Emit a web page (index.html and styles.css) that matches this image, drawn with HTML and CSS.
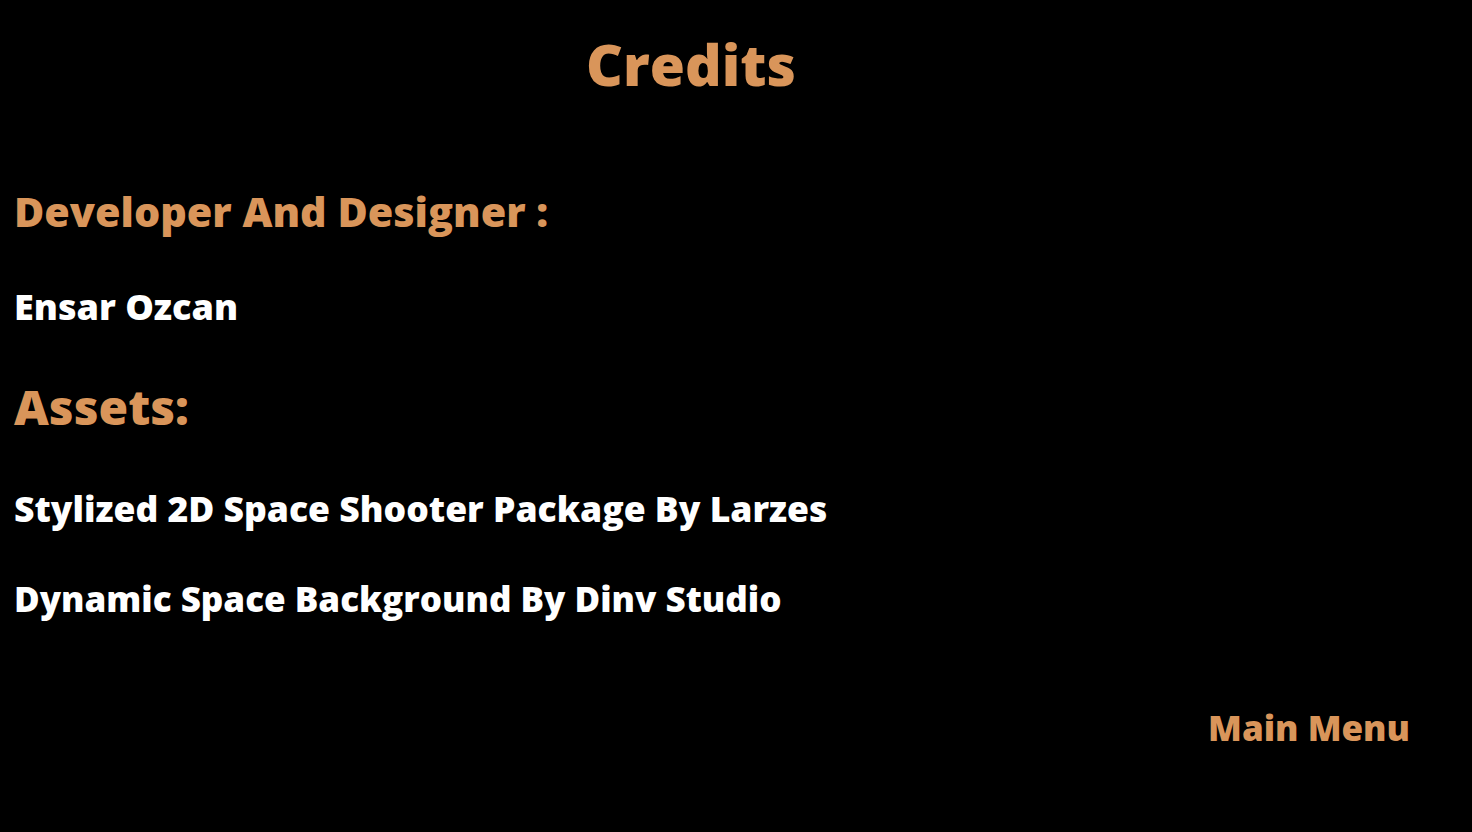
FILE: index.html
```html
<!DOCTYPE html>
<html>
<head>
<meta charset="utf-8">
<link rel="stylesheet" href="styles.css">
</head>
<body>
<div class="screen">
  <h1 class="title">Credits</h1>
  <h2 class="heading dev">Developer And Designer :</h2>
  <p class="name">Ensar Ozcan</p>
  <h2 class="heading assets">Assets:</h2>
  <p class="item first">Stylized 2D Space Shooter Package By Larzes</p>
  <p class="item second">Dynamic Space Background By Dinv Studio</p>
  <div class="footer"><span class="menu">Main Menu</span></div>
</div>
</body>
</html>
```
FILE: styles.css
```css
html, body {
  margin: 0;
  padding: 0;
  background: #000;
  width: 1472px;
  height: 832px;
  overflow: hidden;
}
.screen {
  display: flex;
  flex-direction: column;
  font-family: "Open Sans", "Liberation Sans", sans-serif;
  font-weight: 800;
  line-height: 1;
  padding-left: 14px;
  padding-top: 35px;
}
.title {
  margin: 0;
  width: 1354px;
  text-align: center;
  font-size: 57px;
  line-height: 58px;
  font-weight: 800;
  color: #d9955a;
}
.heading, .name, .item {
  margin: 0;
  white-space: nowrap;
  line-height: 1;
}
.heading { color: #d9955a; font-weight: 800; }
.dev {
  margin-top: 98px;
  font-size: 41.3px;
}
.name {
  margin-top: 57px;
  color: #fff;
  font-size: 36px;
}
.assets {
  margin-top: 58px;
  font-size: 48px;
}
.item {
  color: #fff;
}
.first { margin-top: 60px; font-size: 35.5px; }
.second { margin-top: 54px; font-size: 35px; }
.footer {
  display: flex;
  justify-content: flex-end;
  padding-right: 62px;
  margin-top: 94px;
}
.menu {
  color: #d9955a;
  font-size: 35px;
  line-height: 1;
}
```
